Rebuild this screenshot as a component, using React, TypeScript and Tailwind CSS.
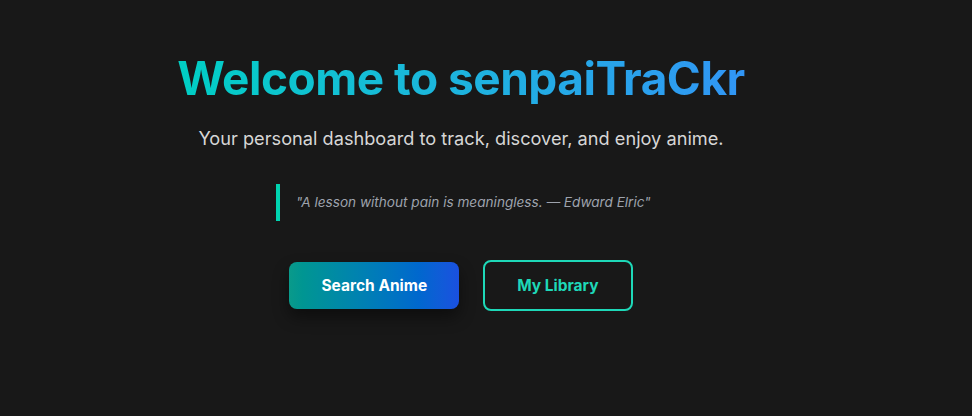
export default function App() {
  return (
    <div
      className="min-h-[416px] w-full bg-[#181818] text-white"
      style={{ fontFamily: "Inter, 'Noto Sans', sans-serif" }}
    >
      <main className="flex w-[922px] flex-col items-center pt-[51px]">
        <h1 className="bg-gradient-to-r from-[#00cfc4] to-[#3195f5] bg-clip-text text-[46px] font-bold leading-[1.2] tracking-[-0.5px] text-transparent">
          Welcome to senpaiTraCkr
        </h1>
        <p className="mt-[19px] text-[18.2px] text-[#d6d6d6]">
          Your personal dashboard to track, discover, and enjoy anime.
        </p>

        <blockquote className="mt-[32px] w-[370px] whitespace-nowrap border-l-4 border-[#00d4b0] py-[8px] pl-[16px] text-[13.6px] italic text-[#9ea3ad]">
          "A lesson without pain is meaningless. — Edward Elric"
        </blockquote>

        <div className="mt-[39px] flex items-center gap-6">
          <button className="rounded-lg bg-gradient-to-r from-[#0a9a8a] to-[#1a50e0] px-8 py-3 text-[15.5px] font-bold text-white shadow-[0_8px_16px_rgba(0,0,0,0.45)]">
            Search Anime
          </button>
          <button className="rounded-lg border-2 border-[#1ed8b8] px-8 py-3 text-[15.5px] font-bold text-[#1ed8b8]">
            My Library
          </button>
        </div>
      </main>
    </div>
  );
}
